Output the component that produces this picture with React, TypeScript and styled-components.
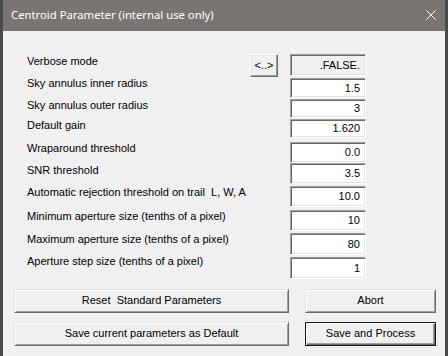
import React from "react";
import styled, { createGlobalStyle } from "styled-components";

const Global = createGlobalStyle`
  html, body { margin: 0; padding: 0; background: #f0f0f0; }
  #root { width: 448px; height: 356px; }
`;

const Win = styled.div`
  width: 448px;
  height: 356px;
  box-sizing: border-box;
  display: flex;
  flex-direction: column;
  border-left: 3px solid #4a4a4a;
  border-right: 3px solid #4a4a4a;
  background: #f0f0f0;
  overflow: hidden;
`;

const TitleBar = styled.div`
  height: 31px;
  flex: 0 0 31px;
  background: #7a7572;
  display: flex;
  align-items: center;
  justify-content: space-between;
  padding: 0 9px 0 8px;
  box-sizing: border-box;
  color: #ffffff;
  font-family: "Noto Sans", "Open Sans", sans-serif;
  font-size: 11.3px;
`;

const TitleText = styled.span`
  line-height: 16px;
  margin-top: -1px;
`;

const CloseIcon = styled.svg`
  width: 10px;
  height: 10px;
  margin-top: -2px;
`;

const Body = styled.div`
  flex: 1;
  padding: 23px 9px 0 11px;
  font-family: "Liberation Sans", Arial, sans-serif;
  font-size: 11px;
  color: #000;
`;

const Row = styled.div<{ $h: number }>`
  height: ${(p) => p.$h}px;
  display: flex;
  align-items: flex-start;
`;

const Label = styled.div<{ $dy: number }>`
  width: 236px;
  box-sizing: border-box;
  padding-left: 13px;
  margin-top: ${(p) => p.$dy}px;
  line-height: 13px;
  white-space: pre;
`;

const Slot = styled.div`
  width: 40px;
  display: flex;
`;

const SmallButton = styled.div`
  width: 28px;
  height: 23px;
  box-sizing: border-box;
  display: flex;
  align-items: center;
  justify-content: center;
  background: #f0f0f0;
  border-top: 1px solid #ffffff;
  border-left: 1px solid #ffffff;
  border-right: 1px solid #696969;
  border-bottom: 1px solid #696969;
  box-shadow: inset -1px -1px 0 #a0a0a0, inset 1px 1px 0 #e3e3e3;
  font-size: 11px;
  line-height: 13px;
  padding-bottom: 1px;
`;

const Field = styled.div<{ $h: number; $ro?: boolean }>`
  width: 76px;
  height: ${(p) => p.$h}px;
  box-sizing: border-box;
  background: ${(p) => (p.$ro ? "#f0f0f0" : "#ffffff")};
  border-top: 1px solid #a0a0a0;
  border-left: 1px solid #a0a0a0;
  border-right: 1px solid #ffffff;
  border-bottom: 1px solid #ffffff;
  box-shadow: inset 1px 1px 0 #696969, inset -1px -1px 0 #e3e3e3;
  display: flex;
  align-items: center;
  justify-content: flex-end;
  padding-right: 5px;
  line-height: 13px;
  font-size: 11px;
`;

const ButtonGrid = styled.div`
  display: grid;
  grid-template-columns: 275px 131px;
  column-gap: 16px;
  row-gap: 9px;
  margin-top: 10px;
`;

const Button = styled.div<{ $default?: boolean }>`
  height: 24px;
  box-sizing: border-box;
  display: flex;
  align-items: center;
  justify-content: center;
  background: #f0f0f0;
  border: 1px solid;
  border-color: ${(p) =>
    p.$default ? "#1a1a1a" : "#e3e3e3 #696969 #696969 #e3e3e3"};
  box-shadow: ${(p) =>
    p.$default
      ? "inset 1px 1px 0 #ffffff, inset -1px -1px 0 #696969, inset -2px -2px 0 #a0a0a0"
      : "inset 1px 1px 0 #ffffff, inset -1px -1px 0 #a0a0a0"};
  font-size: 11px;
  line-height: 13px;
  white-space: pre;
  padding-bottom: 1px;
`;

type RowData = {
  label: string;
  value: string;
  h: number;
  fh: number;
  dy: number;
  ro?: boolean;
  picker?: boolean;
};

const rows: RowData[] = [
  { label: "Verbose mode", value: ".FALSE.", h: 24, fh: 22, dy: 1, ro: true, picker: true },
  { label: "Sky annulus inner radius", value: "1.5", h: 21, fh: 20, dy: -1 },
  { label: "Sky annulus outer radius", value: "3", h: 20, fh: 19, dy: 0 },
  { label: "Default gain", value: "1.620", h: 23, fh: 19, dy: 0 },
  { label: "Wraparound threshold", value: "0.0", h: 21, fh: 21, dy: 0 },
  { label: "SNR threshold", value: "3.5", h: 23, fh: 21, dy: 1 },
  { label: "Automatic rejection threshold on trail  L, W, A", value: "10.0", h: 24, fh: 21, dy: 0 },
  { label: "Minimum aperture size (tenths of a pixel)", value: "10", h: 23, fh: 21, dy: 0 },
  { label: "Maximum aperture size (tenths of a pixel)", value: "80", h: 24, fh: 22, dy: 0 },
  { label: "Aperture step size (tenths of a pixel)", value: "1", h: 22, fh: 22, dy: -2 },
];

export default function App() {
  return (
    <>
      <Global />
      <Win>
        <TitleBar>
          <TitleText>Centroid Parameter (internal use only)</TitleText>
          <CloseIcon viewBox="0 0 10 10">
            <path d="M0.5 0.5 L9.5 9.5 M9.5 0.5 L0.5 9.5" stroke="#ffffff" strokeWidth="1" fill="none" />
          </CloseIcon>
        </TitleBar>
        <Body>
          {rows.map((r) => (
            <Row key={r.label} $h={r.h}>
              <Label $dy={r.dy}>{r.label}</Label>
              <Slot>{r.picker && <SmallButton>{"<..>"}</SmallButton>}</Slot>
              <Field $h={r.fh} $ro={r.ro}>
                {r.value}
              </Field>
            </Row>
          ))}
          <ButtonGrid>
            <Button>{"Reset  Standard Parameters"}</Button>
            <Button>Abort</Button>
            <Button>Save current parameters as Default</Button>
            <Button $default>Save and Process</Button>
          </ButtonGrid>
        </Body>
      </Win>
    </>
  );
}
